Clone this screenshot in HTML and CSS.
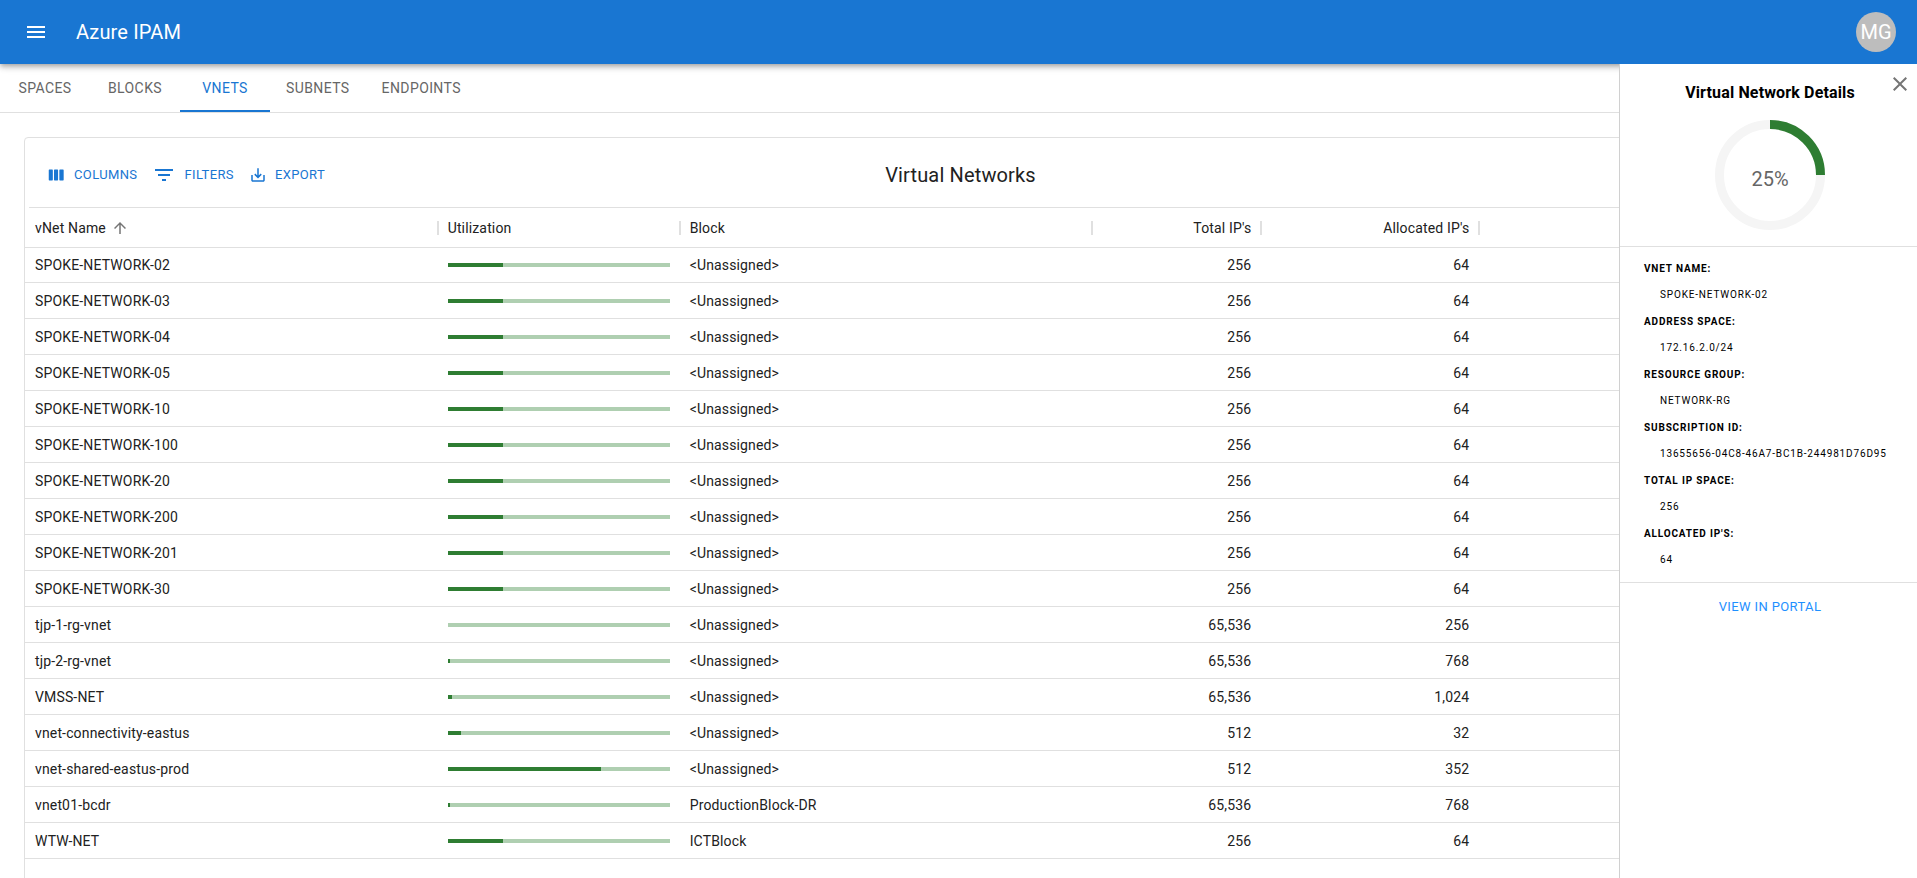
FILE: index.html
```html
<!DOCTYPE html>
<html lang="en">
<head>
<meta charset="utf-8">
<title>Azure IPAM</title>
<link rel="stylesheet" href="styles.css">
</head>
<body>
<header class="appbar">
  <button class="icon-button" aria-label="Open menu"><svg width="24" height="24" viewBox="0 0 24 24"><path d="M3 18h18v-2H3v2zm0-5h18v-2H3v2zm0-7v2h18V6H3z"/></svg></button>
  <h1 class="appbar-title">Azure IPAM</h1>
  <button class="avatar" aria-label="Account">MG</button>
</header>
<div class="workspace">
  <main class="main">
    <nav class="tabs">
      <a class="tab" href="#spaces">Spaces</a>
      <a class="tab" href="#blocks">Blocks</a>
      <a class="tab tab-active" href="#vnets" aria-current="page">vNets</a>
      <a class="tab" href="#subnets">Subnets</a>
      <a class="tab" href="#endpoints">Endpoints</a>
    </nav>
    <section class="card">
      <div class="toolbar">
        <div class="tools">
          <button class="tool"><svg width="20" height="20" viewBox="0 0 24 24"><path d="M4 5.500h3.500q.7 0 .7.700v11.600q0 .7-.7.700H4q-.7 0-.7-.7V6.200q0-.7.7-.7zM10.300 5.500h3.500q.7 0 .7.700v11.600q0 .7-.7.700h-3.500q-.7 0-.7-.7V6.200q0-.7.7-.7zM16.700 5.500h3.800q.7 0 .7.700v11.600q0 .7-.7.700h-3.800q-.7 0-.7-.7V6.200q0-.7.7-.7z"/></svg>Columns</button>
          <button class="tool"><svg width="24" height="24" viewBox="0 0 24 24"><path d="M10 18h4v-2h-4v2zM3 6v2h18V6H3zm3 7h12v-2H6v2z"/></svg>Filters</button>
          <button class="tool"><svg width="18" height="18" viewBox="0 0 24 24"><path d="M19 12v7H5v-7H3v7c0 1.100.9 2 2 2h14c1.100 0 2-.9 2-2v-7h-2zm-6 .67l2.590-2.580L17 11.500l-5 5-5-5 1.410-1.410L11 12.670V3h2z"/></svg>Export</button>
        </div>
        <h2 class="card-title">Virtual Networks</h2>
      </div>
      <table class="grid">
        <colgroup><col><col class="col-util"><col><col class="col-total"><col class="col-alloc"><col></colgroup>
        <thead>
          <tr>
            <th><span class="head">vNet Name <svg width="18" height="18" viewBox="0 0 24 24"><path d="M4 12l1.410 1.410L11 7.830V20h2V7.830l5.580 5.590L20 12l-8-8-8 8z"/></svg></span></th>
            <th><span class="head">Utilization</span></th>
            <th><span class="head">Block</span></th>
            <th><span class="head head-end">Total IP's</span></th>
            <th><span class="head head-end">Allocated IP's</span></th>
            <th></th>
          </tr>
        </thead>
        <tbody id="rows"></tbody>
      </table>
    </section>
  </main>
  <aside class="details">
    <button class="close" aria-label="Close"><svg width="24" height="24" viewBox="0 0 24 24"><path d="M19 6.410L17.590 5 12 10.590 6.410 5 5 6.410 10.590 12 5 17.590 6.410 19 12 13.410 17.590 19 19 17.590 13.410 12z"/></svg></button>
    <div class="summary">
      <h2 class="details-title">Virtual Network Details</h2>
      <div class="gauge">
        <svg width="110" height="110" viewBox="0 0 110 110"><circle class="gauge-track" cx="55" cy="55" r="50.500"/><path class="gauge-value" d="M55 4.500A50.500 50.500 0 0 1 105.500 55"/></svg>
        <span class="gauge-label">25%</span>
      </div>
    </div>
    <dl class="facts">
      <dt>vNet Name:</dt><dd>SPOKE-NETWORK-02</dd>
      <dt>Address Space:</dt><dd>172.16.2.0/24</dd>
      <dt>Resource Group:</dt><dd>NETWORK-RG</dd>
      <dt>Subscription ID:</dt><dd>13655656-04C8-46A7-BC1B-244981D76D95</dd>
      <dt>Total IP Space:</dt><dd>256</dd>
      <dt>Allocated IP's:</dt><dd>64</dd>
    </dl>
    <a class="portal-link" href="#portal">View in Portal</a>
  </aside>
</div>
<script src="rows.js"></script>
</body>
</html>
```
FILE: styles.css
```css
* { box-sizing: border-box; }
body {
  margin: 0;
  height: 100vh;
  display: flex;
  flex-direction: column;
  overflow: hidden;
  font-family: Roboto, "Liberation Sans", sans-serif;
  font-size: 14px;
  color: #212121;
  background: #fff;
}
button { border: 0; padding: 0; background: none; font: inherit; color: inherit; cursor: pointer; }
a { text-decoration: none; }
h1, h2 { margin: 0; font-size: 20px; font-weight: 400; }
svg { display: block; fill: currentColor; }

.appbar {
  height: 64px;
  flex: none;
  display: flex;
  align-items: center;
  gap: 16px;
  padding: 0 21px 0 12px;
  color: #fff;
  background: #1976d2;
  box-shadow: 0 2px 4px -1px rgba(0, 0, 0, .2), 0 4px 5px rgba(0, 0, 0, .14), 0 1px 10px rgba(0, 0, 0, .12);
}
.icon-button { padding: 12px; }
.appbar-title { flex: 1; letter-spacing: .0075em; }
.avatar {
  width: 40px;
  height: 40px;
  border-radius: 50%;
  font-size: 20px;
  background: #bdbdbd;
}

.workspace { position: relative; flex: 1; min-height: 0; }
.main { height: 100%; overflow: hidden; }
.tabs { display: flex; border-bottom: 1px solid #e0e0e0; }
.tab {
  min-width: 90px;
  height: 48px;
  padding: 0 16px;
  line-height: 49px;
  text-align: center;
  text-transform: uppercase;
  letter-spacing: .02857em;
  color: #666;
}
.tab-active { color: #1976d2; border-bottom: 2px solid #1976d2; }

.card {
  margin: 24px;
  min-height: 100%;
  border: 1px solid #e0e0e0;
  border-radius: 4px;
}
.toolbar {
  display: grid;
  grid-template-columns: 1fr auto 1fr;
  align-items: center;
  height: 70px;
  margin: 0 4px;
  padding: 4px 0 0 4px;
  border-bottom: 1px solid #e0e0e0;
}
.tools { display: flex; gap: 15px; padding-left: 13px; }
.tool {
  display: flex;
  align-items: center;
  gap: 8px;
  font-size: 13px;
  text-transform: uppercase;
  letter-spacing: .02857em;
  color: #1976d2;
}
.card-title { letter-spacing: .0075em; }

.grid {
  width: 100%;
  table-layout: fixed;
  border-collapse: separate;
  border-spacing: 0;
  letter-spacing: .01071em;
}
.col-util { width: 242px; }
.col-total { width: 169px; }
.col-alloc { width: 218px; }
.grid th, .grid td {
  height: 36px;
  padding: 0 10px;
  border-bottom: 1px solid #e0e0e0;
  font-weight: 400;
  text-align: left;
}
.grid th { height: 40px; padding-right: 0; }
.grid tbody tr:first-child td { height: 35px; }
.head {
  display: flex;
  align-items: center;
  gap: 5px;
  height: 14px;
  margin-right: -1px;
  padding-right: 9px;
  border-right: 2px solid #e0e0e0;
}
.head svg { color: #757575; }
.head-end { justify-content: flex-end; }
.grid td.num { text-align: right; }
.bar { height: 4px; background: #afcfb1; }
.bar-fill { height: 4px; background: #2e7d32; }

.details {
  position: absolute;
  top: 0;
  right: 0;
  bottom: 0;
  width: 298px;
  border-left: 1px solid #d0d0d0;
  color: #000;
  background: #fff;
}
.close { position: absolute; top: 8px; right: 5px; color: #757575; }
.summary {
  display: flex;
  flex-direction: column;
  align-items: center;
  gap: 15px;
  padding: 17px 0 16px 3px;
  border-bottom: 1px solid #e0e0e0;
}
.details-title { font-size: 16px; line-height: 24px; font-weight: 700; letter-spacing: .00938em; }
.gauge { display: grid; place-items: center; }
.gauge > * { grid-area: 1 / 1; }
.gauge circle, .gauge path { fill: none; stroke-width: 9px; }
.gauge-track { stroke: #f5f5f5; }
.gauge-value { stroke: #2e7d32; }
.gauge-label { padding-top: 8px; font-size: 20px; color: #666; }
.facts {
  margin: 0;
  padding: 8px 24px 9px;
  border-bottom: 1px solid #e0e0e0;
  font-size: 10px;
  text-transform: uppercase;
  letter-spacing: .08333em;
}
.facts dt { line-height: 27px; font-weight: 700; }
.facts dd { margin: 0 0 0 16px; line-height: 26px; white-space: nowrap; }
.portal-link {
  display: block;
  padding: 8px 0 8px 3px;
  line-height: 32px;
  text-align: center;
  font-size: 13px;
  text-transform: uppercase;
  letter-spacing: .02857em;
  color: #1e90ff;
}
```
FILE: rows.js
```javascript
const networks = [
  ...["02", "03", "04", "05", "10", "100", "20", "200", "201", "30"]
    .map(n => ["SPOKE-NETWORK-" + n, "<Unassigned>", 256, 64]),
  ["tjp-1-rg-vnet", "<Unassigned>", 65536, 256],
  ["tjp-2-rg-vnet", "<Unassigned>", 65536, 768],
  ["VMSS-NET", "<Unassigned>", 65536, 1024],
  ["vnet-connectivity-eastus", "<Unassigned>", 512, 32],
  ["vnet-shared-eastus-prod", "<Unassigned>", 512, 352],
  ["vnet01-bcdr", "ProductionBlock-DR", 65536, 768],
  ["WTW-NET", "ICTBlock", 256, 64],
];

const body = document.getElementById("rows");
for (const [name, block, total, allocated] of networks) {
  const row = body.insertRow();
  row.insertCell().textContent = name;
  const bar = document.createElement("div");
  bar.className = "bar";
  const fill = document.createElement("div");
  fill.className = "bar-fill";
  fill.style.width = Math.round(allocated / total * 100) + "%";
  bar.append(fill);
  row.insertCell().append(bar);
  row.insertCell().textContent = block;
  for (const value of [total, allocated]) {
    const cell = row.insertCell();
    cell.className = "num";
    cell.textContent = value.toLocaleString("en-US");
  }
  row.insertCell();
}
```
